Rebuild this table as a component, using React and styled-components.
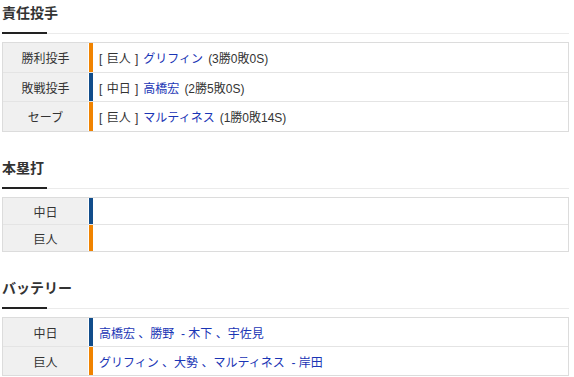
import React from "react";
import styled, { createGlobalStyle } from "styled-components";

const Global = createGlobalStyle`
  html, body { margin: 0; padding: 0; background: #fff; }
  body { font-family: "Liberation Sans", "Noto Sans CJK JP", sans-serif; color: #333; }
`;

const ORANGE = "#f08300";
const BLUE = "#114d8b";
const LINK = "#1a35b5";

const Page = styled.div`
  padding: 3px 5px 0 2px;
  display: flex;
  flex-direction: column;
`;

const Section = styled.section`
  display: flex;
  flex-direction: column;
  & + & { margin-top: 26px; }
`;

const Heading = styled.h2`
  margin: 0;
  font-size: 14px;
  line-height: 20px;
  font-weight: bold;
  color: #333;
  padding-bottom: 9px;
`;

const Rule = styled.div`
  display: flex;
  align-items: flex-end;
  height: 2px;
  margin-bottom: 8px;
`;

const RuleMark = styled.span`
  width: 45px;
  height: 2px;
  background: #222;
`;

const RuleRest = styled.span`
  flex: 1;
  height: 1px;
  background: #ebebeb;
`;

const Table = styled.div`
  border: 1px solid #dcdcdc;
  display: flex;
  flex-direction: column;
`;

const Row = styled.div`
  display: grid;
  grid-template-columns: 86px 1fr;
  height: ${(p) => p.$h}px;
  & + & { border-top: 1px solid #e4e4e4; }
`;

const Label = styled.div`
  background: #f0f0f0;
  border-right: 1px solid #fff;
  display: flex;
  align-items: center;
  justify-content: center;
  font-size: 12px;
  color: #333;
`;

const Value = styled.div`
  border-left: 4px solid ${(p) => (p.$team === "g" ? ORANGE : BLUE)};
  display: flex;
  align-items: center;
  padding-left: 6px;
  font-size: 12px;
  color: #333;
  white-space: pre;
`;

const Team = styled.span`
  color: #333;
  word-spacing: 1px;
  margin-right: 5px;
`;

const Link = styled.a`
  color: ${LINK};
  text-decoration: none;
  margin-right: 5px;
`;

const Names = styled.span`
  color: ${LINK};
`;

function Header({ children }) {
  return (
    <>
      <Heading>{children}</Heading>
      <Rule>
        <RuleMark />
        <RuleRest />
      </Rule>
    </>
  );
}

const pitchers = [
  { label: "勝利投手", team: "g", teamName: "巨人", name: "グリフィン", stat: "(3勝0敗0S)", h: 29 },
  { label: "敗戦投手", team: "d", teamName: "中日", name: "高橋宏", stat: "(2勝5敗0S)", h: 28 },
  { label: "セーブ", team: "g", teamName: "巨人", name: "マルティネス", stat: "(1勝0敗14S)", h: 29 },
];

export default function App() {
  return (
    <>
      <Global />
      <Page>
        <Section>
          <Header>責任投手</Header>
          <Table>
            {pitchers.map((p) => (
              <Row key={p.label} $h={p.h}>
                <Label>{p.label}</Label>
                <Value $team={p.team}>
                  <Team>[ {p.teamName} ]</Team>
                  <Link href="#">{p.name}</Link>
                  <span>{p.stat}</span>
                </Value>
              </Row>
            ))}
          </Table>
        </Section>
        <Section>
          <Header>本塁打</Header>
          <Table>
            <Row $h={26}>
              <Label>中日</Label>
              <Value $team="d" />
            </Row>
            <Row $h={26}>
              <Label>巨人</Label>
              <Value $team="g" />
            </Row>
          </Table>
        </Section>
        <Section>
          <Header>バッテリー</Header>
          <Table>
            <Row $h={28}>
              <Label>中日</Label>
              <Value $team="d">
                <Names>高橋宏 、勝野  - 木下 、宇佐見</Names>
              </Value>
            </Row>
            <Row $h={28}>
              <Label>巨人</Label>
              <Value $team="g">
                <Names>グリフィン 、大勢 、マルティネス  - 岸田</Names>
              </Value>
            </Row>
          </Table>
        </Section>
      </Page>
    </>
  );
}
